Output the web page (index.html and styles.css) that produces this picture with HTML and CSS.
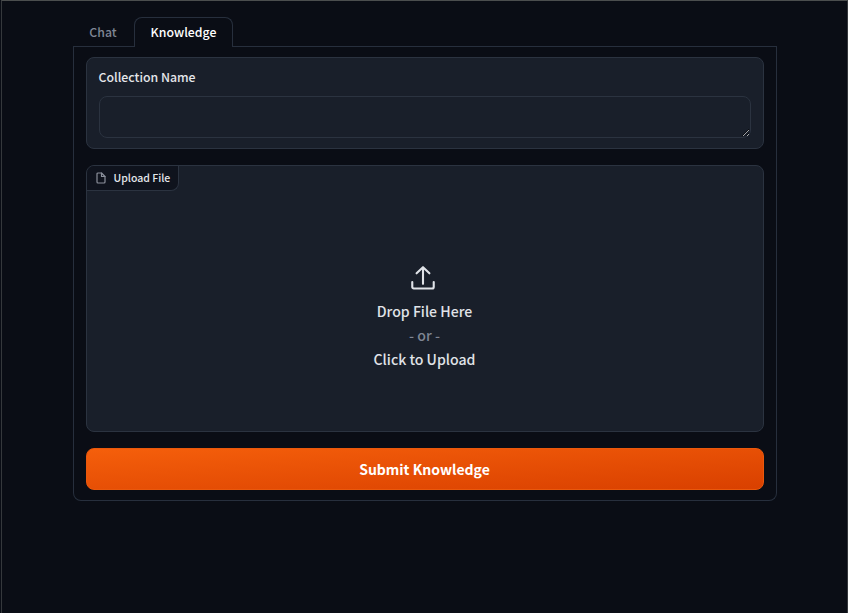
FILE: index.html
```html
<!DOCTYPE html>
<html lang="en">
<head>
<meta charset="utf-8">
<title>Knowledge</title>
<link rel="stylesheet" href="styles.css">
</head>
<body>
<main class="app">
  <nav class="tabs">
    <button class="tab">Chat</button>
    <button class="tab selected">Knowledge</button>
    <span class="tab-line"></span>
  </nav>
  <section class="panel">
    <label class="block field">
      <span class="label">Collection Name</span>
      <textarea class="input"></textarea>
    </label>
    <div class="block upload">
      <div class="badge">
        <svg class="file-icon" viewBox="0 0 24 24" fill="none" stroke="currentColor" stroke-width="2.4" stroke-linecap="round" stroke-linejoin="round"><path d="M13 2H6a2 2 0 0 0-2 2v16a2 2 0 0 0 2 2h12a2 2 0 0 0 2-2V9z"/><path d="M13 2v7h7"/></svg>
        <span>Upload File</span>
      </div>
      <div class="drop">
        <svg class="upload-icon" viewBox="0 0 24 24" fill="none" stroke="currentColor" stroke-width="1.8" stroke-linecap="round" stroke-linejoin="round"><path d="M21.2 15.5v4.2a1.3 1.3 0 0 1-1.3 1.3H4.1a1.3 1.3 0 0 1-1.3-1.3v-4.2"/><path d="M17.5 8L12 2.700 6.500 8M12 3v14"/></svg>
        <span>Drop File Here</span>
        <span class="or">- or -</span>
        <span>Click to Upload</span>
      </div>
    </div>
    <button class="submit">Submit Knowledge</button>
  </section>
</main>
</body>
</html>
```
FILE: styles.css
```css
* { box-sizing: border-box; }
body {
  margin: 0;
  background: #0a0d15;
  font-family: "Noto Sans CJK SC", "Open Sans", sans-serif;
}
button { font-family: inherit; margin: 0; }
.app {
  height: 613px;
  padding: 16px 70px 0 71px;
  border: 1px solid #35383c;
  border-top-color: #4b4e4e;
  border-bottom: 0;
  margin-left: 1px;
  overflow: hidden;
}
.tabs { display: flex; height: 30px; }
.tab {
  width: 61px;
  padding: 1px 1px 0 0;
  border: 0;
  border-bottom: 1px solid #272f3d;
  background: none;
  color: #7f8694;
  font-size: 12.3px;
  font-weight: 500;
  line-height: 27px;
}
.tab.selected {
  width: 99px;
  padding: 0 0 1px;
  border: 1px solid #272f3d;
  border-bottom: 0;
  border-radius: 8px 8px 0 0;
  color: #fff;
}
.tab-line { flex: 1; border-bottom: 1px solid #272f3d; }
.panel {
  height: 454px;
  padding: 10px 12px;
  border: 1px solid #272f3d;
  border-top: 0;
  border-radius: 0 0 8px 8px;
  display: flex;
  flex-direction: column;
  gap: 16px;
}
.block {
  background: #191f2a;
  border: 1px solid #2b3340;
  border-radius: 8px;
}
.field { display: block; height: 92px; padding: 9px 12px; }
.label {
  display: block;
  height: 29px;
  margin-left: -0.5px;
  line-height: 20px;
  font-size: 12.3px;
  font-weight: 500;
  color: #e5e7eb;
}
.input {
  display: block;
  width: 100%;
  height: 42px;
  background: #191f2a;
  border: 1px solid #2b3340;
  border-radius: 8px;
  resize: vertical;
  color-scheme: dark;
}
.upload { height: 267px; overflow: hidden; }
.badge {
  display: flex;
  align-items: center;
  gap: 7px;
  width: 92px;
  height: 25px;
  padding: 0 0 1px 7.5px;
  background: #0f131d;
  border: solid #2b3340;
  border-width: 0 1px 1px 0;
  border-radius: 0 0 8px 0;
  color: #e5e7eb;
  font-size: 10.5px;
  font-weight: 500;
  white-space: nowrap;
}
.file-icon { width: 12px; height: 12px; color: #8b909b; }
.drop {
  display: flex;
  flex-direction: column;
  align-items: center;
  padding: 72px 1px 0 0;
  font-size: 14.1px;
  line-height: 24px;
  font-weight: 500;
  color: #e0e3e8;
}
.upload-icon { width: 28px; height: 28px; margin: 1px 4px 7px 0; }
.or { color: #7f8694; }
.submit {
  height: 42px;
  padding: 0 1px 1px 0;
  border: 1px solid #ea580c;
  border-radius: 8px;
  background: linear-gradient(to bottom right, #f55f0b, #d94000);
  color: #fff;
  font-size: 14px;
  font-weight: 700;
}
```
